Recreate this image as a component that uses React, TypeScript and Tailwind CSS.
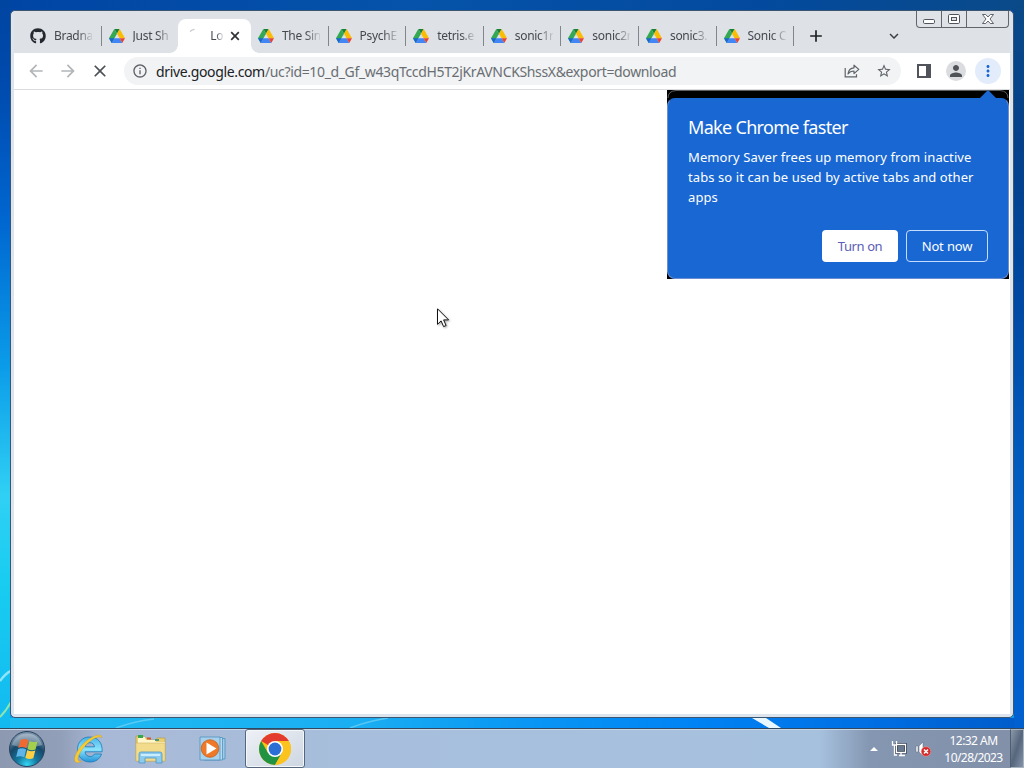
import type { ReactNode } from 'react'
import { FaGithub } from 'react-icons/fa'
import {
  MdAdd,
  MdArrowBack,
  MdArrowForward,
  MdClose,
  MdInfoOutline,
  MdKeyboardArrowDown,
  MdMoreVert,
  MdPerson,
  MdStarOutline,
} from 'react-icons/md'

interface TabProps {
  title: string
  icon: ReactNode
  divider?: boolean
}

const driveTabs = ['The Sin', 'PsychE', 'tetris.e', 'sonic1r', 'sonic2r', 'sonic3.', 'Sonic C']

function DriveIcon() {
  return (
    <svg viewBox="0 0 16 14" className="h-[14px] w-4">
      <path d="M5.3 0h5.4L8 4.7z" fill="#188038" />
      <path d="M5.3 0 0 9.2 2.7 14 8 4.7z" fill="#34a853" />
      <path d="M10.7 0 8 4.7l2.6 4.5H16z" fill="#fbbc04" />
      <path d="M5.4 9.2 2.7 14h10.6l-2.7-4.8z" fill="#4285f4" />
      <path d="M0 9.2h5.4L2.7 14z" fill="#1967d2" />
      <path d="M16 9.2h-5.4l2.7 4.8z" fill="#ea4335" />
    </svg>
  )
}

function Tab({ title, icon, divider = true }: TabProps) {
  return (
    <div className="flex h-full w-[77.6px] shrink-0 items-center pl-[7px] first:w-[78.6px] nth-2:w-[76.6px]">
      <span className="flex w-4 shrink-0 justify-center">{icon}</span>
      <span className="ml-2 w-[38px] whitespace-nowrap [mask-image:linear-gradient(to_right,black_62%,transparent_105%)]">
        {title}
      </span>
      {divider && <span className="ml-auto h-5 w-px bg-[#80868b]" />}
    </div>
  )
}

function ActiveTab() {
  return (
    <div className="relative flex h-[34px] w-[72.8px] shrink-0 items-center self-end rounded-t-lg bg-white pl-2">
      <svg viewBox="0 0 16 16" className="h-4 w-4">
        <path d="M4 3.5Q6 1.5 8.5 1.3" fill="none" stroke="#c4c7cb" strokeWidth="1.2" />
      </svg>
      <span className="ml-[8px] w-[13px] whitespace-nowrap [mask-image:linear-gradient(to_right,black_45%,transparent_110%)]">
        Lo
      </span>
      <svg viewBox="0 0 14 14" className="ml-[5px] h-[14px] w-[14px]">
        <path d="M3.2 3.2l7.6 7.6M10.8 3.2l-7.6 7.6" stroke="#303236" strokeWidth="1.7" />
      </svg>
      <span className="absolute bottom-0 -left-2 h-2 w-2 bg-[radial-gradient(circle_at_0_0,transparent_7.5px,white_8px)]" />
      <span className="absolute -right-2 bottom-0 h-2 w-2 bg-[radial-gradient(circle_at_100%_0,transparent_7.5px,white_8px)]" />
    </div>
  )
}

function WindowButtons() {
  return (
    <div className="mr-px flex h-[17px] shrink-0 rounded-b border border-t-0 border-[#62666c] bg-[#dfe2e7]">
      <div className="flex w-[25px] justify-center border-r border-[#62666c]">
        <svg viewBox="0 0 24 16" className="h-4 w-6">
          <rect x="6.5" y="8.5" width="11" height="4" rx="1.2" fill="#fff" stroke="#50545c" />
        </svg>
      </div>
      <div className="flex w-[25px] justify-center border-r border-[#62666c]">
        <svg viewBox="0 0 24 16" className="h-4 w-6">
          <rect x="6.5" y="3.5" width="11" height="9" rx="1.2" fill="#fff" stroke="#50545c" />
          <rect x="9.5" y="6.5" width="5" height="3" fill="#dfe2e7" stroke="#50545c" />
        </svg>
      </div>
      <div className="flex w-[41px] justify-center">
        <svg viewBox="0 0 24 16" className="h-4 w-6">
          <path
            d="M6.5 3.5h3.2L12 6l2.3-2.5h3.2L14 8l3.5 4.5h-3.2L12 10l-2.3 2.5H6.5L10 8z"
            fill="#fff"
            stroke="#50545c"
            strokeWidth=".9"
            strokeLinejoin="round"
          />
        </svg>
      </div>
    </div>
  )
}

function TabStrip() {
  return (
    <div className="flex h-[42px] items-start bg-[#dee1e6] pl-[9px] text-[12px] tracking-[-0.3px] text-[#45494e]">
      <div className="flex h-[42px] items-center pt-2">
        <Tab title="Bradna" icon={<FaGithub className="h-4 w-4 text-[#24292f]" />} />
        <Tab title="Just Sh" icon={<DriveIcon />} divider={false} />
        <ActiveTab />
        {driveTabs.map((title) => (
          <Tab key={title} title={title} icon={<DriveIcon />} />
        ))}
      </div>
      <MdAdd className="mt-[15px] ml-[12px] h-5 w-5 shrink-0 text-[#202124]" />
      <MdKeyboardArrowDown className="mt-[16px] ml-[59px] h-[18px] w-[18px] shrink-0 text-[#3c4043]" />
      <div className="ml-auto">
        <WindowButtons />
      </div>
    </div>
  )
}

function ShareIcon() {
  return (
    <svg viewBox="0 0 16 16" className="h-4 w-4" fill="none" stroke="#5f6368" strokeWidth="1.2">
      <path d="M1.2 5v8.8h11.3v-2.5" />
      <path d="M10 2.2v2.6C6.5 5 4.5 7 4 11c1.5-2.2 3.2-3 6-3v2.6l4.8-4.2z" strokeLinejoin="round" />
    </svg>
  )
}

function Toolbar() {
  return (
    <div className="flex h-[37px] items-center border-b border-[#dadce0] bg-white pl-[12px] text-[#5f6368]">
      <MdArrowBack className="h-5 w-5 text-[#b3b6b9]" />
      <MdArrowForward className="ml-3 h-5 w-5 text-[#b3b6b9]" />
      <MdClose className="ml-3 h-5 w-5 text-[#4c5054]" />
      <div className="ml-[14px] flex h-7 w-[777px] items-center rounded-full bg-[#f1f3f4] pr-[9px] pl-2">
        <MdInfoOutline className="h-4 w-4 shrink-0" />
        <span className="ml-2 text-[14px] tracking-[-0.35px] whitespace-nowrap text-[#6a6e73]">
          <span className="text-[#202124]">drive.google.com</span>
          /uc?id=10_d_Gf_w43qTccdH5T2jKrAVNCKShssX&amp;export=download
        </span>
        <span className="ml-auto flex items-center gap-4">
          <ShareIcon />
          <MdStarOutline className="h-4 w-4" />
        </span>
      </div>
      <svg viewBox="0 0 14 14" className="ml-4 h-[14px] w-[14px]">
        <path d="M0 0h14v14H0zM2 2v10h7V2z" fill="#50545a" fillRule="evenodd" />
      </svg>
      <span className="ml-[15px] flex h-5 w-5 items-center justify-center rounded-full bg-[#dadce0]">
        <MdPerson className="h-[18px] w-[18px] text-[#4f5358]" />
      </span>
      <span className="ml-[9px] flex h-[26px] w-[26px] items-center justify-center rounded-full bg-[#e3ecfb]">
        <MdMoreVert className="h-[18px] w-[18px] text-[#1967d2]" />
      </span>
    </div>
  )
}

function MemorySaverPromo() {
  return (
    <div className="absolute top-0 right-px w-[342px] bg-black">
      <svg viewBox="0 0 342 8" className="block h-2 w-full">
        <path d="M1 8Q1 1 9 .5H333Q341 1 341 8" fill="none" stroke="#777" strokeWidth=".8" />
        <path d="M313 8l8-8 8 8z" fill="#1967d2" />
      </svg>
      <div className="h-[181px] rounded-lg border border-[#6d8fd0] border-t-[#1967d2] bg-[#1967d2] px-5 pt-[16px] text-white">
        <h2 className="text-[18px] leading-6 tracking-[-0.68px]">Make Chrome faster</h2>
        <p className="mt-[8px] text-[13px] leading-5 tracking-[0.09px] whitespace-nowrap">
          Memory Saver frees up memory from inactive
          <br />
          tabs so it can be used by active tabs and other
          <br />
          apps
        </p>
        <div className="mt-[23px] flex justify-end gap-2 text-[13px]">
          <button className="h-8 w-[76px] rounded bg-white pt-0.5 tracking-[-0.4px] text-[#5a5eb5]">Turn on</button>
          <button className="h-8 w-[82px] rounded border border-[#c5dcff] pt-0.5 tracking-[-0.15px]">Not now</button>
        </div>
      </div>
    </div>
  )
}

function Cursor() {
  return (
    <svg viewBox="0 0 14 21" className="absolute top-[218px] left-[423px] h-[21px] w-[14px] drop-shadow-[1px_1px_1px_rgba(0,0,0,0.35)]">
      <path d="M.5.8v15.500l3.600-3.400 2.500 5.700 2.500-1.100-2.500-5.600h5z" fill="#fff" stroke="#111" strokeWidth="1" />
    </svg>
  )
}

function BrowserWindow() {
  return (
    <div className="flex h-[708px] flex-col rounded-[5px] border border-[#3c5570] bg-[#dce4ee] px-[3px] pb-[3px]">
      <TabStrip />
      <Toolbar />
      <div className="relative flex-1 bg-white">
        <MemorySaverPromo />
        <Cursor />
      </div>
    </div>
  )
}

function Desktop() {
  return (
    <div className="flex h-[728px]">
      <div className="w-[10px] bg-[linear-gradient(#0045a0,#004bae_12%,#0066d0_30%,#0a9be8_50%,#30d0f4_68%,#18cdf0_80%,#12b9f0_100%)]">
        <svg viewBox="0 0 10 728" className="h-full w-full">
          <path d="M0 681Q6 673 11 671" fill="none" stroke="#8fe4fa" strokeWidth="2.5" />
          <path d="M0 717Q6 711 11 702" fill="none" stroke="#8be6b0" strokeWidth="2" />
        </svg>
      </div>
      <div className="flex w-[1004px] flex-col">
        <div className="h-[10px] bg-[linear-gradient(to_right,#0045a4,#0553aa_40%,#034a9e_75%,#0a4a8a)]" />
        <div className="bg-[linear-gradient(#0048a0_50%,#0a9cf0_50%)]">
          <BrowserWindow />
        </div>
        <div className="flex-1 bg-[linear-gradient(to_right,#1fbcf2,#1aaef2_35%,#0a98f4_50%,#0083f4_68%,#0070e4_85%,#005ccb)]">
          <svg viewBox="0 0 1004 10" className="h-[10px] w-full">
            <path d="M106 10Q125 3 144 1M340 10Q358 3 378 0" fill="none" stroke="#7ed8f6" strokeWidth="1.5" opacity=".6" />
            <path d="M742 0h14l15 10h-12z" fill="#e9f7ff" />
          </svg>
        </div>
      </div>
      <div className="flex-1 bg-[linear-gradient(#0a4a88,#05408a_20%,#0048a2_40%,#005cbf_65%,#0060d0_100%)]" />
    </div>
  )
}

function StartOrb() {
  return (
    <svg viewBox="0 0 38 38" className="h-[38px] w-[38px]">
      <defs>
        <radialGradient id="orb" cx=".5" cy=".95" r=".85">
          <stop offset="0" stopColor="#35d8f5" />
          <stop offset=".35" stopColor="#14789f" />
          <stop offset=".7" stopColor="#174768" />
          <stop offset="1" stopColor="#7690a8" />
        </radialGradient>
      </defs>
      <circle cx="19" cy="19" r="17.5" fill="url(#orb)" stroke="#27435f" />
      <path d="M4 15A15.500 15.500 0 0 1 34 15Q19 20 4 15z" fill="#fff" opacity=".3" />
      <path d="M12.500 10q4-2 8 .3l-2 8q-4-2.200-8.200-.4z" fill="#ee6a32" />
      <path d="M21.500 11q4 2 8 .2l-2 8.200q-4 1.700-8-.5z" fill="#a4cf4c" />
      <path d="M10 19.200q4.200-1.800 8.200.3l-2 7.800q-4-2-8-.4z" fill="#5fb4e8" />
      <path d="M19.300 20q4 2.200 8 .4l-2 7.800q-4 1.800-8-.5z" fill="#fbd045" />
    </svg>
  )
}

function ExplorerEIcon() {
  return (
    <svg viewBox="0 0 32 32" className="h-8 w-8">
      <defs>
        <linearGradient id="ie" x2="0" y2="1">
          <stop offset="0" stopColor="#49b3e8" />
          <stop offset=".5" stopColor="#8be2fa" />
          <stop offset="1" stopColor="#2394d8" />
        </linearGradient>
      </defs>
      <path
        d="M16.500 4C9 4 4.500 9.500 4.500 16.500S9.500 29 17 29c5.500 0 9.800-2.800 11.500-8h-7c-.9 1.700-2.300 2.500-4.300 2.500-3 0-4.900-1.700-5.100-4.700h17C29.800 10 25 4 16.500 4zM12.200 13.800c.5-2.600 2.100-4.100 4.700-4.100s4.300 1.500 4.600 4.100z"
        fill="url(#ie)"
        stroke="#1a78b8"
        strokeWidth=".8"
        fillRule="evenodd"
      />
      <path
        d="M29 5C29-1 18 3 10 11 3 18-1 28 3.500 29.500c1.500.5 3.500-.4 5-1.500-3 .8-4.500-.7-3.300-4.300C7.500 17 16 7 24 4.300c2.500-.8 4-.7 5 .7z"
        fill="#f6cc35"
        stroke="#c79a20"
        strokeWidth=".4"
      />
    </svg>
  )
}

function FolderIcon() {
  return (
    <svg viewBox="0 0 34 30" className="h-[30px] w-[34px]">
      <path d="M2 3V2h8v2h5l1 2h6l1-2h8v23H2z" fill="#e9cf70" stroke="#b99b49" strokeWidth=".7" />
      <path d="M4 3h7l1 3h9l1 2h9v3H4z" fill="#fff6c9" />
      <path d="M4 1h5v3H4z" fill="#32a852" />
      <path d="M13 3.500h4v2h-4z" fill="#d25736" />
      <path d="M21 5h4v2h-4z" fill="#4b9a75" />
      <path d="M2 9h29v18H2z" fill="#f2dc8c" stroke="#cfb562" strokeWidth=".6" />
      <path d="M5 29V20q0-2 2-2h19q2 0 2 2v9h-6v-5H11v5z" fill="#8ccbed" stroke="#4c96c4" strokeWidth=".8" />
      <path d="M7 20h19v2H7z" fill="#c9edff" />
    </svg>
  )
}

function MediaPlayerIcon() {
  return (
    <svg viewBox="0 0 28 26" className="h-[26px] w-7">
      <path d="M8 2.500h18v20.500H8z" fill="#9ecbe8" stroke="#4f93bd" strokeWidth=".8" />
      <path d="M5 1.500h18.500v22.500H5z" fill="#b7daf0" stroke="#4f93bd" strokeWidth=".8" />
      <path d="M1 1h20v23H1z" fill="#a7d1ed" stroke="#4f93bd" strokeWidth=".8" />
      <circle cx="11" cy="12.5" r="8.8" fill="#ee7928" stroke="#c95e1c" strokeWidth=".8" />
      <path d="M7.500 6.500v12l10-6z" fill="#fff" />
    </svg>
  )
}

function ChromeIcon() {
  return (
    <svg viewBox="0 0 32 32" className="h-8 w-8">
      <circle cx="16" cy="16" r="16" fill="#fbc116" />
      <path d="M16 16 2.150 8A16 16 0 0 1 29.850 8z" fill="#e33b2e" />
      <path d="M2.150 8A16 16 0 0 0 16 32l6.900-12L16 16 9.100 20z" fill="#229342" />
      <path d="M16 8h13.850A16 16 0 0 1 16 32l6.900-12z" fill="#fcc31e" />
      <circle cx="16" cy="16" r="8" fill="#fff" />
      <circle cx="16" cy="16" r="6.4" fill="#2b6fd6" />
    </svg>
  )
}

function Tray() {
  return (
    <div className="ml-auto flex h-full items-center">
      <svg viewBox="0 0 8 4" className="h-1 w-2">
        <path d="M0 4l4-4 4 4z" fill="#fff" />
      </svg>
      <svg viewBox="0 0 16 16" className="ml-[13px] h-4 w-4">
        <path d="M5.500 3.500h9v8h-9z" fill="#68798f" stroke="#202a38" strokeWidth="2.6" />
        <path d="M5.500 3.500h9v8h-9zM8 14.500h6M10 12v2M1.500 0v4h4V0M3.500 4v10H6" fill="none" stroke="#fff" strokeWidth="1.3" />
      </svg>
      <svg viewBox="0 0 16 16" className="ml-2 h-4 w-4">
        <path d="M1 5h2v6H1zM4 5l4-4v14l-4-4z" fill="#fff" stroke="#59687a" strokeWidth=".5" />
        <circle cx="11" cy="10.5" r="4.8" fill="#d52b2b" stroke="#f0aaa5" strokeWidth=".5" />
        <path d="M9 8.500l4 4M13 8.500l-4 4" stroke="#fff" strokeWidth="1.5" />
      </svg>
      <div className="ml-[13px] w-[59px] text-center text-[12px] leading-[17px] tracking-[-0.55px] whitespace-nowrap text-white">
        <div>12:32 AM</div>
        <div>10/28/2023</div>
      </div>
      <div className="ml-[7px] h-full w-[14px] border border-[#a9b4c2] border-l-[#4e5d70] bg-[linear-gradient(to_bottom_right,#8b98aa,#56667c_50%,#8493a8)]" />
    </div>
  )
}

function Taskbar() {
  return (
    <div className="flex h-10 items-center border-t border-[#32485f] bg-[linear-gradient(to_right,#8c99b0,#929fb9_6%,#a8b9d7_10%,#a7bfdc_35%,#a6c1de_80%,#8496b1_85%,#8290a8_100%)] shadow-[inset_0_1px_0_#c9d8e8]">
      <div className="ml-2">
        <StartOrb />
      </div>
      <div className="ml-[27px]">
        <ExplorerEIcon />
      </div>
      <div className="ml-[29px]">
        <FolderIcon />
      </div>
      <div className="ml-[31px]">
        <MediaPlayerIcon />
      </div>
      <div className="ml-[18px] flex h-[39px] w-[60px] items-center justify-center rounded-[3px] border border-[#56677d] bg-[linear-gradient(to_bottom_right,#eef1f6,#cdd6e2)] shadow-[inset_0_0_0_1px_#f5f8fb]">
        <ChromeIcon />
      </div>
      <Tray />
    </div>
  )
}

export default function App() {
  return (
    <div className="h-[768px] w-[1024px] overflow-hidden font-['Noto_Sans','Open_Sans',sans-serif]">
      <Desktop />
      <Taskbar />
    </div>
  )
}
